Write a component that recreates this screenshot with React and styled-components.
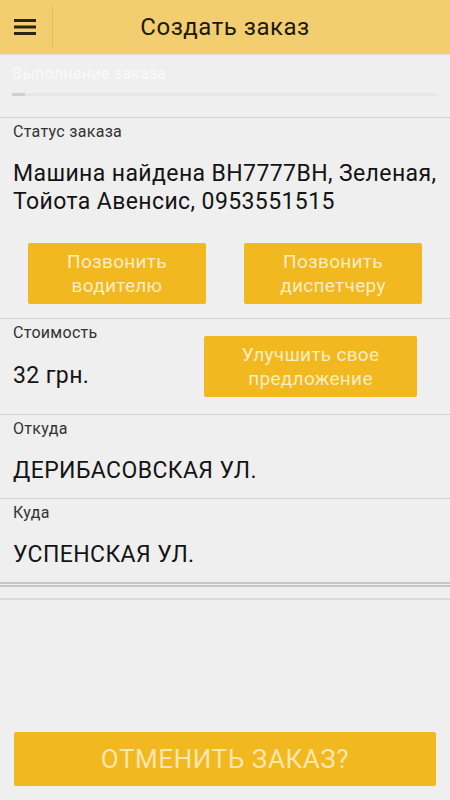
import React from 'react'
import styled, { createGlobalStyle } from 'styled-components';

const GlobalStyle = createGlobalStyle`
  * { box-sizing: border-box; }
  body {
    margin: 0;
    background: #efefef;
    font-family: Roboto, "Noto Sans", "Liberation Sans", sans-serif;
  }
`;

function App() {
  return (
    <Page>
      <GlobalStyle />
      <Header>
        <MenuButton>
          <svg width="22" height="18" viewBox="0 0 22 18">
            <rect x="0" y="1" width="22" height="3" fill="#2a2410" />
            <rect x="0" y="7.5" width="22" height="3" fill="#2a2410" />
            <rect x="0" y="14" width="22" height="3" fill="#2a2410" />
          </svg>
        </MenuButton>
        <Title>Создать заказ</Title>
      </Header>

      <Progress>
        <ProgressLabel>Выполнение заказа</ProgressLabel>
        <Track>
          <Fill style={{ width: '3%' }} />
        </Track>
      </Progress>

      <Section>
        <Label>Статус заказа</Label>
        <Value>Машина найдена ВН7777ВН, Зеленая, Тойота Авенсис, 0953551515</Value>
        <ButtonRow>
          <ActionButton>Позвонить<br />водителю</ActionButton>
          <ActionButton>Позвонить<br />диспетчеру</ActionButton>
        </ButtonRow>
      </Section>

      <CostSection>
        <div>
          <Label>Стоимость</Label>
          <Value>32 грн.</Value>
        </div>
        <ActionButton wide>Улучшить свое<br />предложение</ActionButton>
      </CostSection>

      <Section>
        <Label>Откуда</Label>
        <Value>ДЕРИБАСОВСКАЯ УЛ.</Value>
      </Section>

      <Section last>
        <Label>Куда</Label>
        <Value>УСПЕНСКАЯ УЛ.</Value>
      </Section>

      <Gap />

      <Footer>
        <CancelButton>ОТМЕНИТЬ ЗАКАЗ?</CancelButton>
      </Footer>
    </Page>
  )
}

const Page = styled.div`
  width: 450px;
  height: 800px;
  display: flex;
  flex-direction: column;
  background: #efefef;
  overflow: hidden;
`;

const Header = styled.header`
  height: 54px;
  background: #f2ce70;
  display: flex;
  align-items: center;
  position: relative;
  box-shadow: 0 1px 1px rgba(0, 0, 0, 0.06);
`;

const MenuButton = styled.div`
  width: 53px;
  height: 42px;
  display: flex;
  align-items: center;
  justify-content: center;
  padding-right: 3px;
  border-right: 1px solid #e3bd5c;
`;

const Title = styled.h1`
  position: absolute;
  left: 0;
  right: 0;
  margin: 0;
  text-align: center;
  font-size: 24px;
  letter-spacing: 0.5px;
  font-weight: 400;
  color: #1d1a12;
  pointer-events: none;
`;

const Progress = styled.div`
  padding: 10px 13px 21px 12px;
  border-bottom: 1px solid #d2d2d2;
`;

const ProgressLabel = styled.div`
  font-size: 16px;
  letter-spacing: 0.3px;
  line-height: 20px;
  color: #fafafa;
`;

const Track = styled.div`
  margin-top: 9px;
  height: 3px;
  background: #e7e7e7;
`;

const Fill = styled.div`
  height: 100%;
  background: #cfcfcf;
`;

const Section = styled.section`
  padding: 4px 13px 13px;
  border-bottom: ${p => (p.last ? '5px double #c6c6c6' : '1px solid #d2d2d2')};
`;

const Label = styled.div`
  font-size: 16px;
  letter-spacing: 0.3px;
  line-height: 20px;
  color: #333;
`;

const Value = styled.div`
  margin-top: 18px;
  font-size: 23px;
  letter-spacing: 0.4px;
  line-height: 28px;
  color: #141414;
`;

const ButtonRow = styled.div`
  margin-top: 27px;
  padding: 0 15px 1px;
  display: flex;
  justify-content: space-between;
`;

const ActionButton = styled.button`
  width: ${p => (p.wide ? '213px' : '178px')};
  height: 61px;
  border: none;
  border-radius: 2px;
  background: #f2b81f;
  color: #fdedc4;
  font-family: inherit;
  font-size: 19px;
  letter-spacing: 0.3px;
  line-height: 24px;
  padding: 0;
`;

const CostSection = styled.section`
  display: flex;
  align-items: center;
  justify-content: space-between;
  padding: 17px 33px 17px 13px;
  border-bottom: 1px solid #d2d2d2;

  & > div {
    align-self: stretch;
    margin-top: -13px;
  }

  ${Value} {
    margin-top: 19px;
  }
`;

const Gap = styled.div`
  height: 13px;
  border-bottom: 2px solid #dadada;
`;

const Footer = styled.div`
  margin-top: auto;
  padding: 0 14px 14px;
`;

const CancelButton = styled.button`
  width: 100%;
  height: 54px;
  border: none;
  border-radius: 2px;
  background: #f2b81f;
  color: #fbe6ae;
  font-family: inherit;
  font-size: 26px;
  letter-spacing: 0.6px;
  padding: 0;
`;

export default App
